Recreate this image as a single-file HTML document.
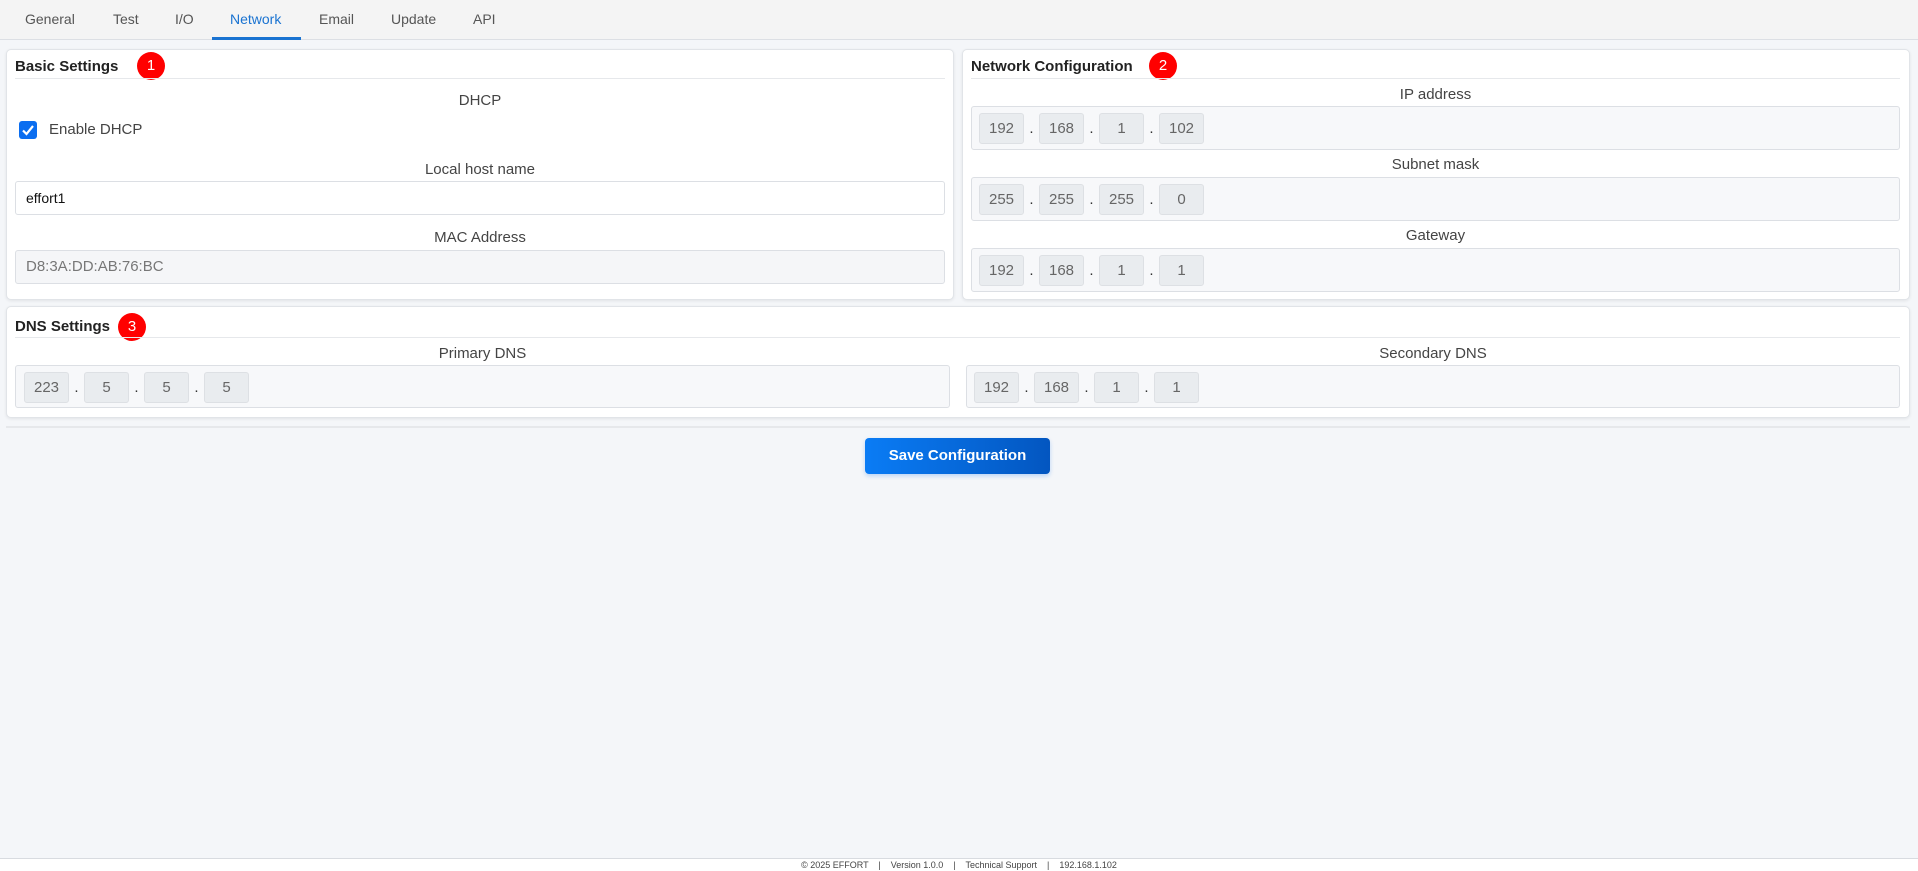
<!DOCTYPE html>
<html><head><meta charset="utf-8"><style>
*{box-sizing:border-box;margin:0;padding:0}
body{width:1918px;height:871px;background:#f4f6f9;font-family:"Liberation Sans",Arial,sans-serif;font-size:14px;color:#444;position:relative;overflow:hidden}
.abs{position:absolute}
.tabs{left:0;top:0;width:1918px;height:40px;background:#f4f4f4;border-bottom:1px solid #dcdfe4}
.tab{position:absolute;top:11px;font-size:14px;color:#555}
.card{background:#fff;border:1px solid #e1e4e8;border-radius:5px;box-shadow:0 1px 3px rgba(0,0,0,.08)}
.title{font-weight:bold;font-size:15px;color:#222}
.badge{width:28px;height:28px;border-radius:50%;background:#f00;color:#fff;font-size:15px;text-align:center;line-height:28px}
.hr{height:1px;background:#e6e8eb}
.lbl{text-align:center;font-size:15px;color:#444}
.inp{border:1px solid #dcdfe4;border-radius:3px;height:34px;padding-left:10px;line-height:32px;font-size:15px}
.box{background:#f7f8fa;border:1px solid #dcdfe4;border-radius:3px}
.oct{position:absolute;width:45px;height:31px;background:#e9ecef;border:1px solid #dde0e4;border-radius:3px;text-align:center;line-height:29px;color:#666;font-size:15px}
.dot{position:absolute;width:15px;text-align:center;color:#333;font-size:15px}
</style></head><body>
<div class="abs tabs">
<span class="tab" style="left:25px">General</span>
<span class="tab" style="left:113px">Test</span>
<span class="tab" style="left:175px">I/O</span>
<span class="tab" style="left:230px;color:#1a73d1">Network</span>
<span class="tab" style="left:319px">Email</span>
<span class="tab" style="left:391px">Update</span>
<span class="tab" style="left:473px">API</span>
<div class="abs" style="left:212px;top:37px;width:89px;height:3px;background:#1a73d1"></div>
</div>

<div class="abs card" style="left:6px;top:49px;width:948px;height:251px"></div>
<div class="abs title" style="left:15px;top:58px">Basic Settings</div>
<div class="abs badge" style="left:137px;top:52px">1</div>
<div class="abs hr" style="left:15px;top:78px;width:930px"></div>
<div class="abs lbl" style="left:15px;top:92px;width:930px">DHCP</div>
<div class="abs" style="left:19px;top:121px;width:18px;height:18px;background:#0b6ef0;border-radius:3px"><svg width="18" height="18"><path d="M4 9.5l3.5 3.5L14 5" stroke="#fff" stroke-width="2.2" fill="none"/></svg></div>
<div class="abs" style="left:49px;top:121px;font-size:15px">Enable DHCP</div>
<div class="abs lbl" style="left:15px;top:161px;width:930px">Local host name</div>
<div class="abs inp" style="left:15px;top:181px;width:930px;background:#fff;color:#111;font-size:14px">effort1</div>
<div class="abs lbl" style="left:15px;top:229px;width:930px">MAC Address</div>
<div class="abs inp" style="left:15px;top:250px;width:930px;background:#f5f6f8;color:#777">D8:3A:DD:AB:76:BC</div>

<div class="abs card" style="left:962px;top:49px;width:948px;height:251px"></div>
<div class="abs title" style="left:971px;top:58px">Network Configuration</div>
<div class="abs badge" style="left:1149px;top:52px">2</div>
<div class="abs hr" style="left:971px;top:78px;width:929px"></div>

<div class="abs lbl" style="left:971px;top:86px;width:929px">IP address</div>
<div class="abs box" style="left:971px;top:106px;width:929px;height:44px">
<div class="oct" style="left:7px;top:6px">192</div><div class="dot" style="left:52px;top:13px">.</div>
<div class="oct" style="left:67px;top:6px">168</div><div class="dot" style="left:112px;top:13px">.</div>
<div class="oct" style="left:127px;top:6px">1</div><div class="dot" style="left:172px;top:13px">.</div>
<div class="oct" style="left:187px;top:6px">102</div></div>

<div class="abs lbl" style="left:971px;top:156px;width:929px">Subnet mask</div>
<div class="abs box" style="left:971px;top:177px;width:929px;height:44px">
<div class="oct" style="left:7px;top:6px">255</div><div class="dot" style="left:52px;top:13px">.</div>
<div class="oct" style="left:67px;top:6px">255</div><div class="dot" style="left:112px;top:13px">.</div>
<div class="oct" style="left:127px;top:6px">255</div><div class="dot" style="left:172px;top:13px">.</div>
<div class="oct" style="left:187px;top:6px">0</div></div>

<div class="abs lbl" style="left:971px;top:227px;width:929px">Gateway</div>
<div class="abs box" style="left:971px;top:248px;width:929px;height:44px">
<div class="oct" style="left:7px;top:6px">192</div><div class="dot" style="left:52px;top:13px">.</div>
<div class="oct" style="left:67px;top:6px">168</div><div class="dot" style="left:112px;top:13px">.</div>
<div class="oct" style="left:127px;top:6px">1</div><div class="dot" style="left:172px;top:13px">.</div>
<div class="oct" style="left:187px;top:6px">1</div></div>

<div class="abs card" style="left:6px;top:306px;width:1904px;height:112px"></div>
<div class="abs title" style="left:15px;top:318px">DNS Settings</div>
<div class="abs badge" style="left:118px;top:313px">3</div>
<div class="abs hr" style="left:15px;top:337px;width:1885px"></div>
<div class="abs lbl" style="left:15px;top:345px;width:935px">Primary DNS</div>
<div class="abs box" style="left:15px;top:365px;width:935px;height:43px">
<div class="oct" style="left:8px;top:6px">223</div><div class="dot" style="left:53px;top:13px">.</div>
<div class="oct" style="left:68px;top:6px">5</div><div class="dot" style="left:113px;top:13px">.</div>
<div class="oct" style="left:128px;top:6px">5</div><div class="dot" style="left:173px;top:13px">.</div>
<div class="oct" style="left:188px;top:6px">5</div></div>
<div class="abs lbl" style="left:966px;top:345px;width:934px">Secondary DNS</div>
<div class="abs box" style="left:966px;top:365px;width:934px;height:43px">
<div class="oct" style="left:7px;top:6px">192</div><div class="dot" style="left:52px;top:13px">.</div>
<div class="oct" style="left:67px;top:6px">168</div><div class="dot" style="left:112px;top:13px">.</div>
<div class="oct" style="left:127px;top:6px">1</div><div class="dot" style="left:172px;top:13px">.</div>
<div class="oct" style="left:187px;top:6px">1</div></div>

<div class="abs hr" style="left:6px;top:426px;width:1904px;height:2px"></div>
<div class="abs" style="left:865px;top:438px;width:185px;height:36px;border-radius:4px;background:linear-gradient(90deg,#0a7cf5,#0356c0);color:#fff;font-weight:bold;font-size:15px;text-align:center;line-height:36px;box-shadow:0 2px 4px rgba(10,110,240,.25)">Save Configuration</div>

<div class="abs" style="left:0;top:858px;width:1918px;height:1px;background:#d8dbe0"></div>
<div class="abs" style="left:0;top:859px;width:1918px;height:12px;background:#fff"></div>
<div class="abs" style="left:0;top:860px;width:1918px;text-align:center;font-size:9px;color:#444;white-space:pre">© 2025 EFFORT    |    Version 1.0.0    |    Technical Support    |    192.168.1.102</div>
</body></html>
